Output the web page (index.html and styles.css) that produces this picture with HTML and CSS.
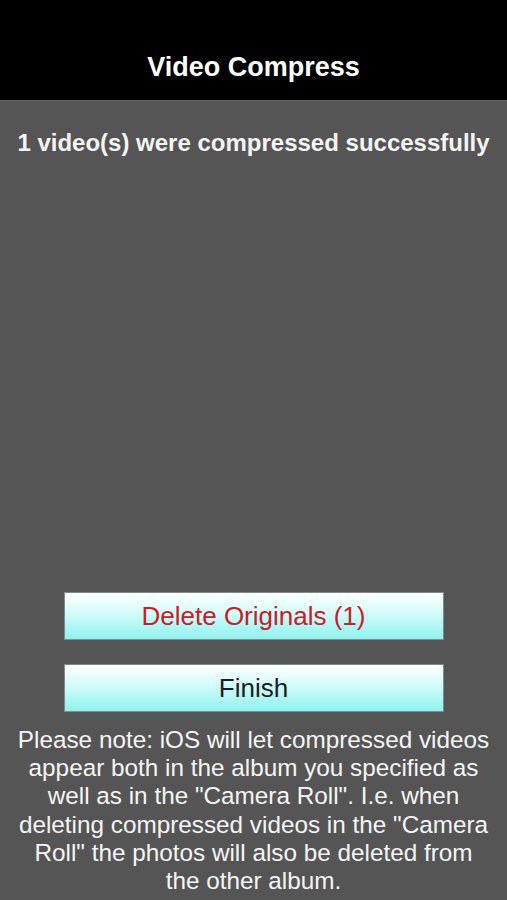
FILE: index.html
```html
<!DOCTYPE html>
<html>
<head>
<meta charset="utf-8">
<link rel="stylesheet" href="styles.css">
</head>
<body>
<header class="topbar">
  <div class="nav"><h1 class="title">Video Compress</h1></div>
</header>
<main class="content">
  <p class="status">1 video(s) were compressed successfully</p>
  <div class="actions">
    <button class="btn btn-danger">Delete Originals (1)</button>
    <button class="btn">Finish</button>
  </div>
  <p class="note">Please note: iOS will let compressed videos appear both in the album you specified as well as in the "Camera Roll". I.e. when deleting compressed videos in the "Camera Roll" the photos will also be deleted from the other album.</p>
</main>
</body>
</html>
```
FILE: styles.css
```css
html, body {
  margin: 0;
  padding: 0;
  background: #555555;
  font-family: "Liberation Sans", Arial, sans-serif;
  color: #f5f5f5;
}
body {
  width: 507px;
  height: 900px;
  overflow: hidden;
}
.topbar {
  background: #000;
  padding-top: 34px;
  border-bottom: 1px solid #5e5e5e;
}
.nav {
  height: 66px;
  display: flex;
  align-items: center;
  justify-content: center;
}
.title {
  margin: 0;
  font-size: 27px;
  font-weight: bold;
  color: #fff;
}
.content {
  display: flex;
  flex-direction: column;
  align-items: center;
}
.status {
  margin: 28px 0 0;
  font-size: 24px;
  line-height: 28px;
  font-weight: bold;
  text-align: center;
}
.actions {
  margin-top: 435px;
  display: flex;
  flex-direction: column;
  gap: 24px;
}
.btn {
  width: 380px;
  height: 48px;
  margin: 0;
  padding: 0;
  border: 1px solid #7c8c8c;
  border-radius: 0;
  background: linear-gradient(to bottom, #fdffff 0%, #d2fbf9 45%, #8ef3ee 100%);
  font-family: "Liberation Sans", Arial, sans-serif;
  font-size: 26px;
  color: #1c1c28;
}
.btn-danger {
  color: #c4202a;
}
.note {
  margin: 14px 0 0;
  width: 478px;
  font-size: 24.3px;
  line-height: 28.2px;
  text-align: center;
}
```
